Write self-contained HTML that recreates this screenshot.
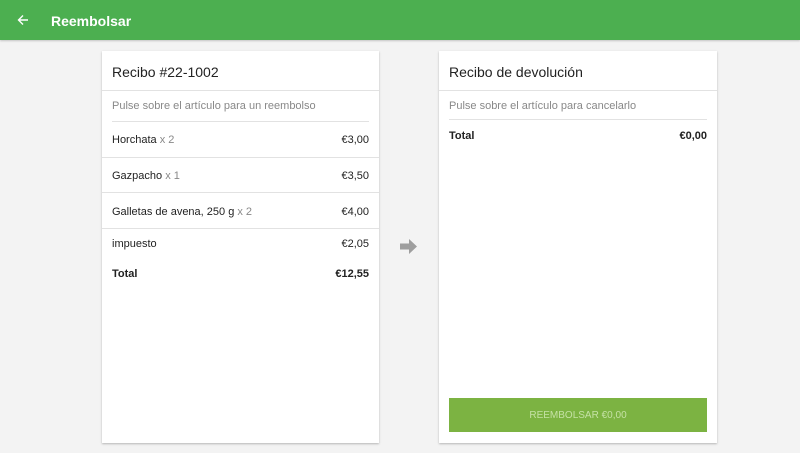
<!DOCTYPE html><html><head><style>
body{margin:0;width:800px;height:453px;background:#f3f3f3;font-family:"Liberation Sans",Roboto,sans-serif;position:relative;overflow:hidden;color:#222}
.bar{position:absolute;left:0;top:0;width:800px;height:40px;background:#4caf50;box-shadow:0 1px 2px rgba(0,0,0,.2)}
.bar .t{position:absolute;left:51px;top:13px;color:#fff;font-size:14px;font-weight:bold}
.card{position:absolute;top:51px;height:392px;background:#fff;box-shadow:0 1px 2px rgba(0,0,0,.25)}
.h{position:absolute;left:10px;top:13px;font-size:14px;color:#222}
.line{position:absolute;height:1px;background:#e2e2e2}
.txt{position:absolute;font-size:11px;white-space:nowrap}
.g{color:#888}
.r{right:10px}
</style></head><body>
<div class="bar"><svg style="position:absolute;left:17px;top:14px" width="12" height="12" viewBox="0 0 12 12"><path d="M11 6H2M6 1.5L1.5 6 6 10.5" stroke="#fff" stroke-width="1.4" fill="none"/></svg><div class="t">Reembolsar</div></div>
<div class="card" style="left:102px;width:277px">
<div class="h">Recibo #22-1002</div>
<div class="line" style="left:0;right:0;top:39px"></div>
<div class="txt g" style="left:10px;top:49px">Pulse sobre el artículo para un reembolso</div>
<div class="line" style="left:10px;right:10px;top:70px"></div>
<div class="txt" style="left:10px;top:83px">Horchata <span class="g">x 2</span></div><div class="txt r" style="top:83px">€3,00</div>
<div class="line" style="left:0;right:0;top:106px"></div>
<div class="txt" style="left:10px;top:119px">Gazpacho <span class="g">x 1</span></div><div class="txt r" style="top:119px">€3,50</div>
<div class="line" style="left:0;right:0;top:141px"></div>
<div class="txt" style="left:10px;top:155px">Galletas de avena, 250 g <span class="g">x 2</span></div><div class="txt r" style="top:155px">€4,00</div>
<div class="line" style="left:0;right:0;top:177px"></div>
<div class="txt" style="left:10px;top:187px">impuesto</div><div class="txt r" style="top:187px">€2,05</div>
<div class="txt" style="left:10px;top:217px;font-weight:bold">Total</div><div class="txt r" style="top:217px;font-weight:bold">€12,55</div>
</div>
<svg style="position:absolute;left:400px;top:239px" width="18" height="16" viewBox="0 0 18 16"><path d="M0 4.5H9V0L17 7.5 9 15V10.5H0Z" fill="#9e9e9e"/></svg>
<div class="card" style="left:439px;width:278px">
<div class="h">Recibo de devolución</div>
<div class="line" style="left:0;right:0;top:39px"></div>
<div class="txt g" style="left:10px;top:49px">Pulse sobre el artículo para cancelarlo</div>
<div class="line" style="left:10px;right:10px;top:68px"></div>
<div class="txt" style="left:10px;top:79px;font-weight:bold">Total</div><div class="txt r" style="top:79px;font-weight:bold">€0,00</div>
<div style="position:absolute;left:10px;right:10px;top:347px;height:34px;background:#7cb342;color:#c5e1a5;font-size:10px;text-align:center;line-height:36px">REEMBOLSAR €0,00</div>
</div>
</body></html>
